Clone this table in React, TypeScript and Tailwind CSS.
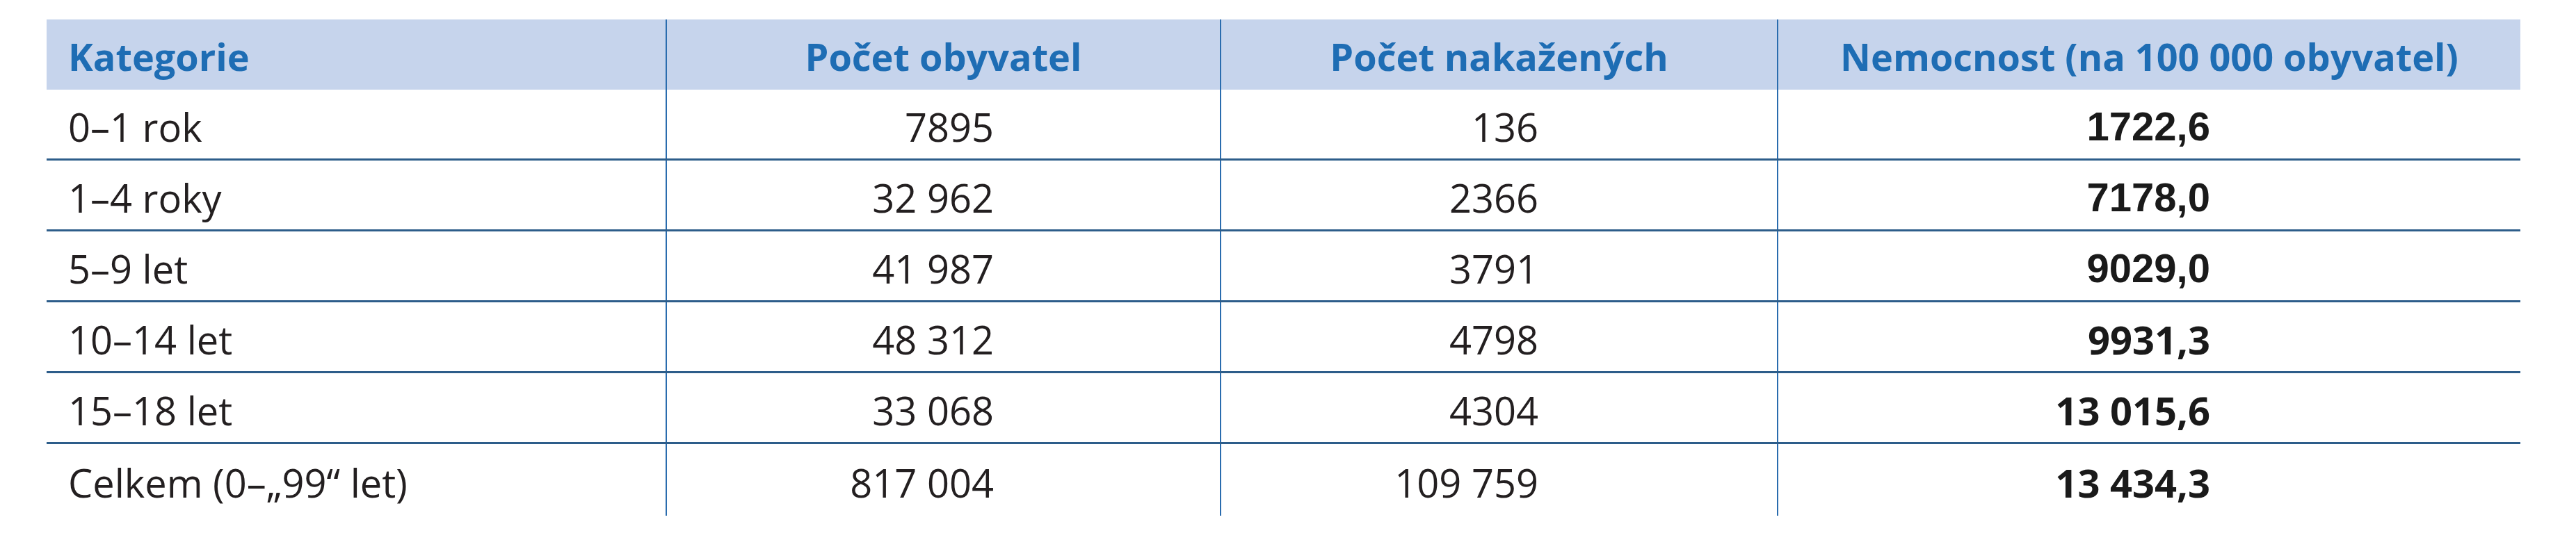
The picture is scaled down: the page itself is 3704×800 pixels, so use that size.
const rows = [
  { label: "0–1 rok", pop: "7895", sick: "136", rate: "1722,6", arial: true },
  { label: "1–4 roky", pop: "32 962", sick: "2366", rate: "7178,0", arial: true },
  { label: "5–9 let", pop: "41 987", sick: "3791", rate: "9029,0", arial: true },
  { label: "10–14 let", pop: "48 312", sick: "4798", rate: "9931,3", arial: false },
  { label: "15–18 let", pop: "33 068", sick: "4304", rate: "13 015,6", arial: false },
  { label: "Celkem (0–„99“ let)", pop: "817 004", sick: "109 759", rate: "13 434,3", arial: false },
];

const cols = "grid grid-cols-[890px_797px_801px_1069px]";
const divider = "border-l-2 border-[#2a6cae]";

export default function App() {
  return (
    <div className="w-[3704px] h-[800px] bg-white pt-[28px] pl-[67px] font-['Open_Sans',sans-serif] text-[56px] leading-none text-[#231f20]">
      <div className="w-[3557px]">
        {/* header */}
        <div className={`${cols} h-[101px] bg-[#c6d4ec] text-[#1e6db4] font-bold text-[54px]`}>
          <div className="flex items-center pl-[31px] pt-[4px]">Kategorie</div>
          <div className={`${divider} flex items-center justify-center pt-[4px]`}>Počet obyvatel</div>
          <div className={`${divider} flex items-center justify-center pt-[4px]`}>Počet nakažených</div>
          <div className={`${divider} flex items-center justify-center pt-[4px]`}>
            Nemocnost (na 100 000 obyvatel)
          </div>
        </div>

        {rows.map((r, i) => {
          const last = i === rows.length - 1;
          return (
            <div
              key={r.label}
              className={`${cols} ${last ? "h-[103px]" : "h-[102px] border-b-[3px] border-[#2d5d8a]"}`}
            >
              <div className="flex items-center pl-[31px] pt-[6px]">{r.label}</div>
              <div className={`${divider} flex items-center justify-end pr-[325px] pt-[6px]`}>{r.pop}</div>
              <div className={`${divider} flex items-center justify-end pr-[343px] pt-[6px]`}>{r.sick}</div>
              <div
                className={`${divider} flex items-center justify-end pr-[446px] pt-[6px] font-bold text-[#1a1a1a] ${
                  r.arial ? "font-['Liberation_Sans',Arial,sans-serif] text-[58px]" : ""
                }`}
              >
                {r.rate}
              </div>
            </div>
          );
        })}
      </div>
    </div>
  );
}
